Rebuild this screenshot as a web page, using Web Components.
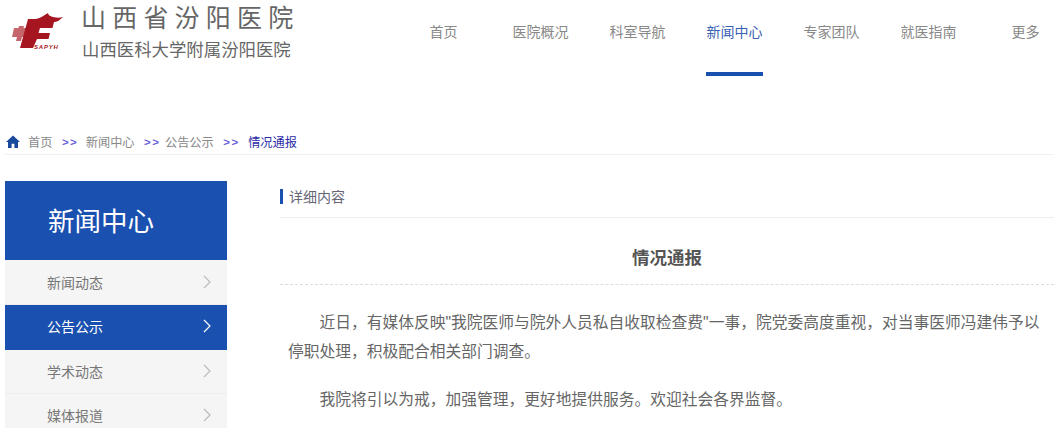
<!DOCTYPE html>
<html lang="zh">
<head>
<meta charset="utf-8">
<title>情况通报</title>
<style>
  body { margin: 0; background: #fff; font-family: "Noto Sans CJK SC", "Liberation Sans", sans-serif; color: #666; overflow: hidden; }
</style>
</head>
<body>
<site-header></site-header>
<bread-crumb></bread-crumb>
<div style="display:flex;padding-left:5px;margin-top:26px">
  <side-menu></side-menu>
  <article-view></article-view>
</div>
<script>
class SiteHeader extends HTMLElement {
  connectedCallback() {
    this.attachShadow({ mode: 'open' });
    const items = ['首页', '医院概况', '科室导航', '新闻中心', '专家团队', '就医指南', '更多'];
    this.shadowRoot.innerHTML = `
      <style>
        :host { display: flex; height: 76px; justify-content: space-between; }
        .brand { display: flex; padding: 2px 0 0 12px; }
        svg { width: 52px; height: 40px; margin: 10px 18px 0 0; }
        .name { font-size: 25px; line-height: 28px; letter-spacing: 6.2px; margin-left: -1px; color: #666; white-space: nowrap; }
        .sub { font-size: 17.4px; line-height: 24px; margin-top: 7px; color: #666; white-space: nowrap; }
        nav { display: flex; margin-right: -20px; }
        a { box-sizing: border-box; width: 97px; height: 76px; padding-top: 20px; font-size: 14px; line-height: 22px; text-align: center; color: #888; }
        a.on { color: #3a62b4; position: relative; }
        a.on::after { content: ''; position: absolute; left: 20px; right: 20px; bottom: 0; height: 4px; background: #1a50b0; }
      </style>
      <div class="brand">
        <svg viewBox="0 0 52 40">
          <path fill="#c4666b" d="M7 14h5l-.5 2H18l-2 9h-6l-1 4H4l1-4H0l2-9h4.500z"/>
          <path fill="#a51620" d="M16 7h8c5-1 8-4 12-6 0 2 2 3 5 4 4 1 7 1 10 0-3 3-6 5-9 5l-1.500 6H28l-1.500 5H38l-1.500 6H25l-4 9H8z"/>
          <text x="22" y="37" font-family="Liberation Sans" font-size="6" font-weight="700" font-style="italic" letter-spacing=".8" fill="#a51620">SAPYH</text>
        </svg>
        <div>
          <div class="name">山西省汾阳医院</div>
          <div class="sub">山西医科大学附属汾阳医院</div>
        </div>
      </div>
      <nav>${items.map(t => `<a class="${t === '新闻中心' ? 'on' : ''}">${t}</a>`).join('')}</nav>
    `;
  }
}

class BreadCrumb extends HTMLElement {
  connectedCallback() {
    this.attachShadow({ mode: 'open' });
    this.shadowRoot.innerHTML = `
      <style>
        :host { display: flex; align-items: center; margin: 53px 0 0 5px; height: 25px; border-bottom: 1px solid #f0f0f0; font-size: 12.2px; color: #888; }
        svg { width: 14px; height: 13px; margin: 0 8px 0 1px; }
        b { color: #6a5fd8; font-family: "Liberation Sans", sans-serif; font-size: 11.5px; letter-spacing: 1.5px; margin: 0 7.5px 0 9.5px; }
        b.tight { margin-right: 4.5px; }
        .now { color: #2a2aa8; margin-left: 1px; }
      </style>
      <svg viewBox="0 0 14 13"><path fill="#1a4a9c" d="M7 .5 0 7h2v6h3.600V8.800h2.800V13H12V7h2z"/></svg>
      <span>首页</span><b>&gt;&gt;</b><span>新闻中心</span><b class="tight">&gt;&gt;</b><span>公告公示</span><b>&gt;&gt;</b><span class="now">情况通报</span>
    `;
  }
}

class SideMenu extends HTMLElement {
  connectedCallback() {
    this.attachShadow({ mode: 'open' });
    const items = ['新闻动态', '公告公示', '学术动态', '媒体报道'];
    this.shadowRoot.innerHTML = `
      <style>
        :host { display: block; flex: 0 0 222px; }
        h2 { margin: 0; height: 79px; box-sizing: border-box; padding-left: 43px; background: #1a50b0; color: #fff; font-size: 26.5px; font-weight: 400; line-height: 78px; }
        div { display: flex; justify-content: space-between; align-items: center; height: 42.3px; padding: 0 16px 1px 42px; background: #f5f5f5; border-bottom: 1px solid #eee; font-size: 14px; color: #777; }
        h2 + div { height: 43.3px; }
        div.on { background: #1a50b0; color: #fff; border-bottom-color: #1a50b0; }
        svg { width: 8px; height: 14px; fill: none; stroke: #bbb; stroke-width: 1.2; }
        .on svg { stroke: #fff; }
      </style>
      <h2>新闻中心</h2>
      ${items.map(t => `<div class="${t === '公告公示' ? 'on' : ''}">${t}<svg viewBox="0 0 8 14"><path d="M1 1l6 6-6 6"/></svg></div>`).join('')}
    `;
  }
}

class ArticleView extends HTMLElement {
  connectedCallback() {
    this.attachShadow({ mode: 'open' });
    this.shadowRoot.innerHTML = `
      <style>
        :host { display: block; flex: 1; margin-left: 53px; }
        .bar { height: 36px; border-bottom: 1px solid #eee; display: flex; align-items: flex-start; font-size: 14px; color: #667; line-height: 16px; }
        .bar i { width: 3px; height: 15px; margin: 8px 6px 0 0; background: #1a50b0; }
        .bar span { margin-top: 7px; }
        h1 { margin: 0; height: 67px; box-sizing: border-box; border-bottom: 1px dashed #ddd; font-size: 17.5px; line-height: 78px; text-align: center; color: #555; }
        p { margin: 0; text-indent: 2em; font-family: "Liberation Sans", "Noto Sans CJK SC", sans-serif; font-size: 15.75px; line-height: 28.5px; color: #666; padding: 0 6px 0 8px; }
        .one { margin-top: 24px; }
        .two { margin-top: 20px; }
      </style>
      <div class="bar"><i></i><span>详细内容</span></div>
      <h1>情况通报</h1>
      <p class="one">近日，有媒体反映"我院医师与院外人员私自收取检查费"一事，院党委高度重视，对当事医师冯建伟予以停职处理，积极配合相关部门调查。</p>
      <p class="two">我院将引以为戒，加强管理，更好地提供服务。欢迎社会各界监督。</p>
    `;
  }
}

customElements.define('site-header', SiteHeader);
customElements.define('bread-crumb', BreadCrumb);
customElements.define('side-menu', SideMenu);
customElements.define('article-view', ArticleView);
</script>
</body>
</html>
